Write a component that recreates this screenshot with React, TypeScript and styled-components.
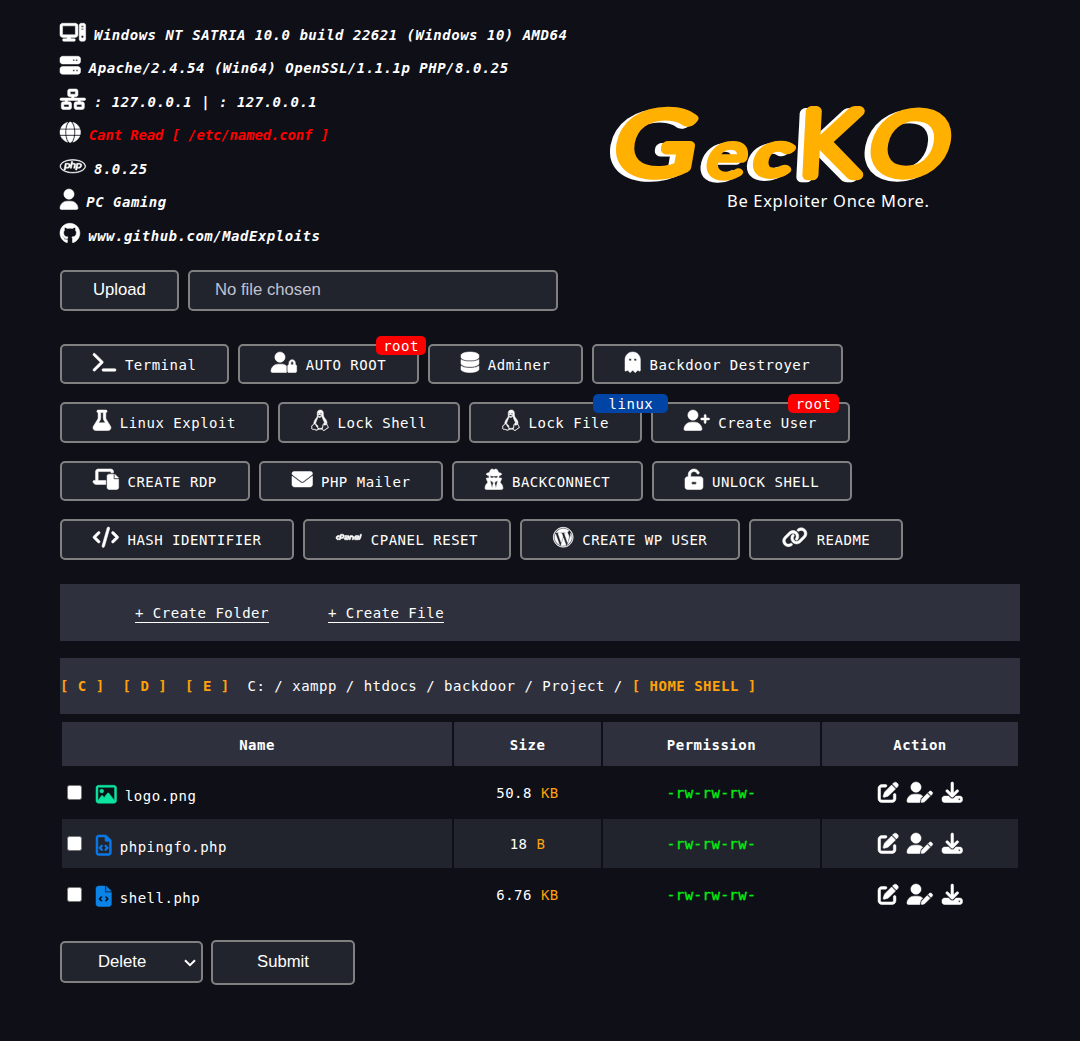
import React from "react";
import styled, { createGlobalStyle } from "styled-components";
import type { IconType } from "react-icons";
import {
  FaComputer, FaServer, FaNetworkWired, FaGlobe, FaPhp, FaUser, FaGithub,
  FaTerminal, FaUserLock, FaDatabase, FaGhost, FaFlask, FaLinux, FaUserPlus,
  FaLaptopFile, FaEnvelope, FaUserSecret, FaUnlockKeyhole, FaCode, FaCpanel,
  FaWordpress, FaLink, FaRegImage, FaRegFileCode, FaFileCode, FaPenToSquare,
  FaUserPen, FaDownload,
} from "react-icons/fa6";

const c = {
  page: "#0e0f17",
  control: "#22242d",
  bar: "#2e313d",
  border: "#808080",
  accent: "#ffa10a",
};

const Global = createGlobalStyle`
  * { box-sizing: border-box; }
  body { margin: 0; background: ${c.page}; }
`;

const Page = styled.main`
  min-height: 1041px;
  padding: 18.7px 60px 0;
  color: #fff;
  font-family: "DejaVu Sans Mono", monospace;
  font-size: 14px;
  letter-spacing: 0.503px;
`;

const ICON_SIZE = 20.5;

/* $units is the glyph's own advance on Font Awesome's 512-unit grid. */
const Glyph = styled.span<{ $units: number; $color?: string }>`
  color: ${(p) => p.$color ?? "inherit"};
  letter-spacing: 0;
  svg {
    width: ${(p) => (p.$units / 512) * ICON_SIZE}px;
    height: ${ICON_SIZE}px;
    vertical-align: -2.6px;
    stroke-width: 13px;
    overflow: visible;
  }
`;

const Header = styled.header`
  display: flex;
  justify-content: space-between;
  height: 251.3px;
`;

const InfoList = styled.ul`
  list-style: none;
  margin: 0;
  padding: 0;
`;

const InfoRow = styled.li`
  height: 33.5px;
  line-height: 33.5px;
  font-weight: bold;
  font-style: italic;
  white-space: pre;
`;

const InfoText = styled.span<{ $error?: boolean }>`
  margin-left: -0.6px;
  color: ${(p) => (p.$error ? "#f00" : "#fff")};
  letter-spacing: ${(p) => (p.$error ? "-0.15px" : "inherit")};
`;

const Brand = styled.div`
  width: 420px;
  padding-top: 81px;
`;

const Wordmark = styled.svg`
  display: block;
  width: 360px;
  height: 90px;
  overflow: visible;
  font-family: Lato, sans-serif;
  font-weight: 300;
  letter-spacing: 0;
`;

const Tagline = styled.div`
  margin-top: -1px;
  padding-left: 127px;
  font: 16.5px/24px "Noto Sans", sans-serif;
  letter-spacing: 0.68px;
  white-space: nowrap;
`;

const Controls = styled.form<{ $top?: number }>`
  display: flex;
  align-items: center;
  gap: ${(p) => (p.$top ? 8 : 9)}px;
  margin-top: ${(p) => p.$top ?? 0}px;
  font-family: "Liberation Sans", Arial, sans-serif;
  font-size: 16.7px;
  letter-spacing: 0;
`;

const Control = styled.div<{ $w: number; $h: number; $pad: number; $muted?: boolean }>`
  display: flex;
  align-items: center;
  width: ${(p) => p.$w}px;
  height: ${(p) => p.$h}px;
  padding: 0 0 0.4px ${(p) => p.$pad}px;
  border: 2px solid ${c.border};
  border-radius: 5px;
  background: ${c.control};
  color: ${(p) => (p.$muted ? "#c0c2d0" : "#fff")};
`;

const Chevron = styled.svg`
  width: 12px;
  height: 8px;
  margin-left: auto;
  margin-right: 5px;
  margin-top: 2px;
`;

const Tools = styled.nav`
  display: flex;
  flex-wrap: wrap;
  gap: 17.9px 8.93px;
  margin-top: 33px;
`;

const Tool = styled.a`
  position: relative;
  height: 40.5px;
  padding: 1px 31px 0 30.9px;
  border: 2px solid ${c.border};
  border-radius: 5px;
  background: ${c.control};
  line-height: 36px;
  white-space: pre;
`;

const Badge = styled.span<{ $bg: string; $right: number; $pad: number }>`
  position: absolute;
  z-index: 1;
  top: -10px;
  right: ${(p) => p.$right}px;
  height: 19px;
  padding: 0 ${(p) => p.$pad}px;
  border-radius: 5px;
  background: ${(p) => p.$bg};
  line-height: 20px;
`;

const CreateBar = styled.div`
  display: flex;
  gap: 59px;
  height: 57px;
  margin-top: 24.3px;
  padding: 19px 75px 0;
  background: ${c.bar};
`;

const CreateLink = styled.a`
  height: 20px;
  line-height: 21px;
  border-bottom: 1px solid #fff;
`;

const PathBar = styled.div`
  height: 56px;
  margin-top: 17px;
  background: ${c.bar};
  line-height: 56px;
  white-space: pre;
  b { color: ${c.accent}; }
`;

const Table = styled.table`
  width: 960px;
  margin-top: 6px;
  border-spacing: 2px;
  table-layout: fixed;
`;

const Th = styled.th<{ $w: number }>`
  width: ${(p) => p.$w}px;
  height: 44px;
  padding: 2px 0 0;
  background: ${c.bar};
`;

const Tr = styled.tr`
  height: 49px;
  text-align: center;
  &:nth-child(even) td { background: ${c.control}; }
`;

const Td = styled.td`
  height: 49px;
  padding: 2px 0 0;
  white-space: pre;
`;

const NameCell = styled.div`
  display: flex;
  padding: 6px 0 0 5px;
  line-height: 30px;
  text-align: left;
`;

const Check = styled.input`
  appearance: none;
  width: 15px;
  height: 15px;
  margin: 3.6px 13.5px 0 0;
  border: 1px solid #767676;
  border-radius: 2.5px;
  background: #fff;
`;

const Unit = styled.span`
  color: ${c.accent};
`;

const Perm = styled.span`
  color: #00f010;
  -webkit-text-stroke: 0.35px #00f010;
`;

const Actions = styled.div`
  display: flex;
  justify-content: center;
  gap: 8.7px;
  padding-bottom: 3px;
`;

const info = [
  { Icon: FaComputer, units: 640, text: "Windows NT SATRIA 10.0 build 22621 (Windows 10) AMD64" },
  { Icon: FaServer, units: 512, text: "Apache/2.4.54 (Win64) OpenSSL/1.1.1p PHP/8.0.25" },
  { Icon: FaNetworkWired, units: 640, text: ": 127.0.0.1 | : 127.0.0.1" },
  { Icon: FaGlobe, units: 512, text: "Cant Read [ /etc/named.conf ]", error: true },
  { Icon: FaPhp, units: 640, text: "8.0.25" },
  { Icon: FaUser, units: 448, text: "PC Gaming" },
  { Icon: FaGithub, units: 496, text: "www.github.com/MadExploits" },
];

type ToolItem = {
  Icon: IconType;
  units: number;
  text: string;
  badge?: { text: string; bg: string; right: number; pad: number };
};

const tools: ToolItem[] = [
  { Icon: FaTerminal, units: 576, text: "Terminal" },
  { Icon: FaUserLock, units: 640, text: "AUTO ROOT", badge: { text: "root", bg: "#f00", right: -9, pad: 7.2 } },
  { Icon: FaDatabase, units: 448, text: "Adminer" },
  { Icon: FaGhost, units: 384, text: "Backdoor Destroyer" },
  { Icon: FaFlask, units: 448, text: "Linux Exploit" },
  { Icon: FaLinux, units: 448, text: "Lock Shell" },
  { Icon: FaLinux, units: 448, text: "Lock File", badge: { text: "linux", bg: "#0045a5", right: -28.5, pad: 15.2 } },
  { Icon: FaUserPlus, units: 640, text: "Create User", badge: { text: "root", bg: "#f00", right: 9, pad: 7.2 } },
  { Icon: FaLaptopFile, units: 640, text: "CREATE RDP" },
  { Icon: FaEnvelope, units: 512, text: "PHP Mailer" },
  { Icon: FaUserSecret, units: 448, text: "BACKCONNECT" },
  { Icon: FaUnlockKeyhole, units: 448, text: "UNLOCK SHELL" },
  { Icon: FaCode, units: 640, text: "HASH IDENTIFIER" },
  { Icon: FaCpanel, units: 640, text: "CPANEL RESET" },
  { Icon: FaWordpress, units: 512, text: "CREATE WP USER" },
  { Icon: FaLink, units: 640, text: "README" },
];

const files = [
  { Icon: FaRegImage, units: 512, color: "#0be5a0", name: "logo.png", size: "50.8", unit: "KB" },
  { Icon: FaRegFileCode, units: 384, color: "#0b78e8", name: "phpingfo.php", size: "18", unit: "B" },
  { Icon: FaFileCode, units: 384, color: "#0b84e8", name: "shell.php", size: "6.76", unit: "KB" },
];

const letters = [
  { ch: "G", x: 11, y: 74, size: 87, sx: 1.25, skew: -10, brush: 10 },
  { ch: "e", x: 103, y: 77, size: 65, sx: 1.17, skew: -14, brush: 6.5 },
  { ch: "c", x: 152, y: 73.5, size: 57, sx: 1.3, skew: -14, brush: 9 },
  { ch: "K", x: 198, y: 74.5, size: 90, sx: 1.06, skew: -3, brush: 10.5 },
  { ch: "O", x: 265, y: 74, size: 86, sx: 1.16, skew: -12, brush: 10 },
];

function Letters({ color, dx, dy }: { color: string; dx: number; dy: number }) {
  return (
    <g fill={color} stroke={color} strokeLinejoin="round" transform={`translate(${dx} ${dy})`}>
      {letters.map((l) => (
        <text
          key={l.ch}
          fontSize={l.size}
          strokeWidth={l.brush}
          transform={`translate(${l.x} ${l.y}) skewX(${l.skew}) scale(${l.sx} 1)`}
        >
          {l.ch}
        </text>
      ))}
    </g>
  );
}

export default function App() {
  return (
    <Page>
      <Global />
      <Header>
        <InfoList>
          {info.map(({ Icon, units, text, error }) => (
            <InfoRow key={text}>
              <Glyph $units={units}><Icon /></Glyph>
              {" "}
              <InfoText $error={error}>{text}</InfoText>
            </InfoRow>
          ))}
        </InfoList>
        <Brand>
          <Wordmark viewBox="0 0 360 90">
            <Letters color="#fff" dx={-6} dy={2} />
            <Letters color="#ffb000" dx={0} dy={0} />
          </Wordmark>
          <Tagline>Be Exploiter Once More.</Tagline>
        </Brand>
      </Header>

      <Controls>
        <Control $w={119} $h={41} $pad={31}>Upload</Control>
        <Control $w={370} $h={41} $pad={25} $muted>No file chosen</Control>
      </Controls>

      <Tools>
        {tools.map(({ Icon, units, text, badge }) => (
          <Tool key={text}>
            <Glyph $units={units}><Icon /></Glyph>
            {" " + text}
            {badge && (
              <Badge $bg={badge.bg} $right={badge.right} $pad={badge.pad}>{badge.text}</Badge>
            )}
          </Tool>
        ))}
      </Tools>

      <CreateBar>
        <CreateLink>+ Create Folder</CreateLink>
        <CreateLink>+ Create File</CreateLink>
      </CreateBar>

      <PathBar>
        <b>{"[ C ]  [ D ]  [ E ]  "}</b>
        {"C: / xampp / htdocs / backdoor / Project / "}
        <b>[ HOME SHELL ]</b>
      </PathBar>

      <Table>
        <thead>
          <tr>
            <Th $w={390}>Name</Th>
            <Th $w={147}>Size</Th>
            <Th $w={217}>Permission</Th>
            <Th $w={196}>Action</Th>
          </tr>
        </thead>
        <tbody>
          {files.map(({ Icon, units, color, name, size, unit }) => (
            <Tr key={name}>
              <Td>
                <NameCell>
                  <Check type="checkbox" />
                  <Glyph $units={units} $color={color}><Icon /></Glyph>
                  {" " + name}
                </NameCell>
              </Td>
              <Td>{size} <Unit>{unit}</Unit></Td>
              <Td><Perm>-rw-rw-rw-</Perm></Td>
              <Td>
                <Actions>
                  <Glyph $units={512}><FaPenToSquare /></Glyph>
                  <Glyph $units={640}><FaUserPen /></Glyph>
                  <Glyph $units={512}><FaDownload /></Glyph>
                </Actions>
              </Td>
            </Tr>
          ))}
        </tbody>
      </Table>

      <Controls $top={19}>
        <Control $w={143} $h={42} $pad={36}>
          Delete
          <Chevron viewBox="0 0 12 8">
            <path d="M1 1.2 6 6.2 11 1.2" fill="none" stroke="#fff" strokeWidth="2" />
          </Chevron>
        </Control>
        <Control $w={144} $h={45} $pad={44}>Submit</Control>
      </Controls>
    </Page>
  );
}
